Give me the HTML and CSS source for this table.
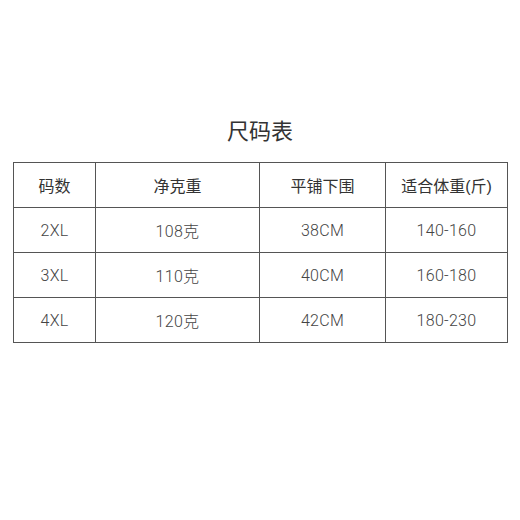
FILE: index.html
```html
<!DOCTYPE html>
<html lang="zh">
<head>
<meta charset="utf-8">
<link rel="stylesheet" href="styles.css">
</head>
<body>
<div class="page">
  <h1 class="title">尺码表</h1>
  <table class="size-table">
    <colgroup>
      <col class="c1"><col class="c2"><col class="c3"><col class="c4">
    </colgroup>
    <thead>
      <tr><th>码数</th><th>净克重</th><th>平铺下围</th><th>适合体重(斤)</th></tr>
    </thead>
    <tbody>
      <tr><td>2XL</td><td>108克</td><td>38CM</td><td>140-160</td></tr>
      <tr><td>3XL</td><td>110克</td><td>40CM</td><td>160-180</td></tr>
      <tr><td>4XL</td><td>120克</td><td>42CM</td><td>180-230</td></tr>
    </tbody>
  </table>
</div>
</body>
</html>
```
FILE: styles.css
```css
html, body {
  margin: 0;
  padding: 0;
  background: #ffffff;
}
.page {
  width: 520px;
  height: 520px;
  box-sizing: border-box;
  padding: 117px 13px 0 13px;
  font-family: "Liberation Sans", "Noto Sans CJK SC", sans-serif;
  color: #333333;
}
.title {
  margin: 0 0 15px 0;
  font-size: 22px;
  line-height: 30px;
  font-weight: normal;
  text-align: center;
  color: #333333;
}
.size-table {
  width: 494px;
  border-collapse: collapse;
  table-layout: fixed;
}
.c1 { width: 82px; }
.c2 { width: 164px; }
.c3 { width: 126px; }
.c4 { width: 122px; }
.size-table th,
.size-table td {
  border: 1px solid #555555;
  height: 44px;
  padding: 0;
  text-align: center;
  vertical-align: middle;
  font-weight: normal;
  font-size: 15px;
  color: #444444;
}
.size-table th {
  font-size: 16px;
  color: #333333;
}
.size-table td {
  font-family: Roboto, "Noto Sans CJK SC", sans-serif;
  font-weight: 300;
  font-size: 16px;
  letter-spacing: 0.3px;
}
```
